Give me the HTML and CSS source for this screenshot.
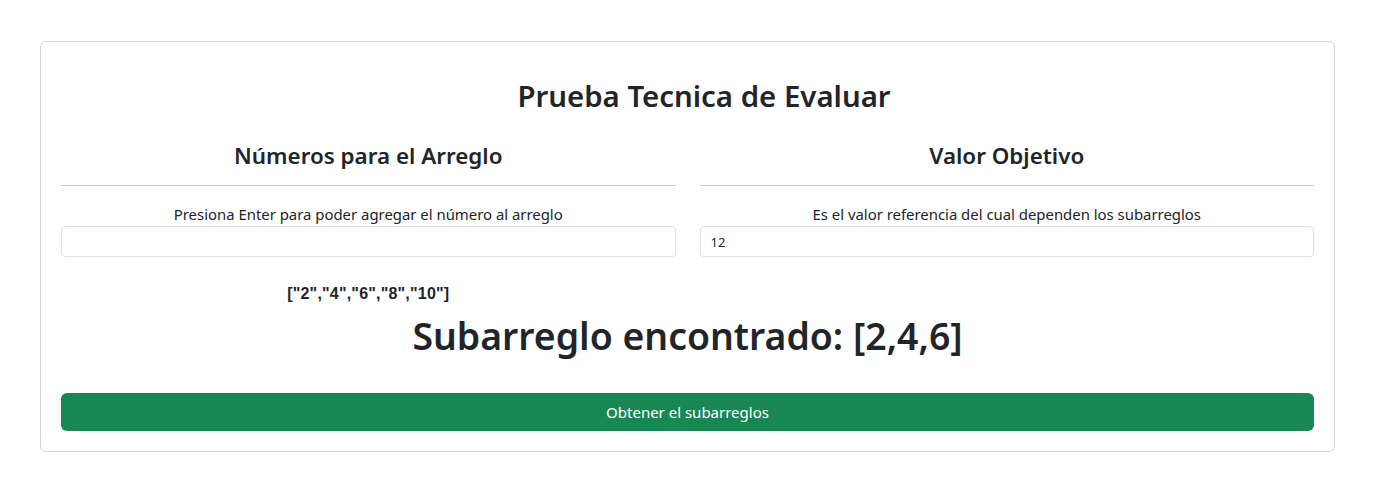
FILE: index.html
```html
<!DOCTYPE html>
<html lang="es">
<head>
<meta charset="utf-8">
<title>Prueba Tecnica de Evaluar</title>
<link rel="stylesheet" href="styles.css">
</head>
<body>
<div class="page">
  <div class="card">
    <h1 class="title">Prueba Tecnica de Evaluar</h1>
    <div class="cols">
      <div class="col">
        <h4 class="col-title">Números para el Arreglo</h4>
        <hr class="rule">
        <label class="hint">Presiona Enter para poder agregar el número al arreglo</label>
        <input class="field" type="text" value="">
        <div class="arr">["2","4","6","8","10"]</div>
      </div>
      <div class="col">
        <h4 class="col-title">Valor Objetivo</h4>
        <hr class="rule">
        <label class="hint">Es el valor referencia del cual dependen los subarreglos</label>
        <input class="field" type="text" value="12">
      </div>
    </div>
    <h2 class="result">Subarreglo encontrado: [2,4,6]</h2>
    <button class="btn">Obtener el subarreglos</button>
  </div>
</div>
</body>
</html>
```
FILE: styles.css
```css
* { box-sizing: border-box; }
body {
  margin: 0;
  background: #fff;
  font-family: "Noto Sans", "Open Sans", sans-serif;
  color: #212529;
}
.page {
  padding: 41px 40px 0 40px;
}
.card {
  border: 1px solid #d3d4d6;
  border-radius: 6px;
  padding: 20px 20px 20px;
  display: flex;
  flex-direction: column;
}
.title {
  margin: 15px 0 0;
  padding-left: 33px;
  text-align: center;
  font-size: 29.4px;
  font-weight: 600;
  line-height: 38px;
}
.cols {
  display: grid;
  grid-template-columns: 1fr 1fr;
  column-gap: 24px;
  margin-top: 26px;
}
.col {
  display: flex;
  flex-direction: column;
}
.col-title {
  margin: 0;
  text-align: center;
  font-size: 22.4px;
  font-weight: 600;
  line-height: 29px;
}
.rule {
  margin: 15px 0 0;
  border: 0;
  border-top: 1px solid #c8c9cb;
  height: 0;
}
.hint {
  display: block;
  margin-top: 16px;
  text-align: center;
  font-size: 14.9px;
  line-height: 24px;
}
.field {
  height: 31px;
  border: 1px solid #dee2e6;
  border-radius: 4px;
  padding: 4px 10px;
  font-family: inherit;
  font-size: 13px;
  color: #212529;
  outline: none;
}
.arr {
  margin-top: 26px;
  text-align: center;
  font-family: "Liberation Sans", Arial, sans-serif;
  font-weight: 700;
  font-size: 16px;
  letter-spacing: 0.2px;
  line-height: 21px;
}
.result {
  margin: 8px 0 0;
  text-align: center;
  font-size: 37.4px;
  font-weight: 600;
  line-height: 48px;
}
.btn {
  margin-top: 33px;
  height: 38px;
  border: 0;
  border-radius: 6px;
  background: #198754;
  color: #fff;
  font-family: inherit;
  font-size: 15px;
}
```
